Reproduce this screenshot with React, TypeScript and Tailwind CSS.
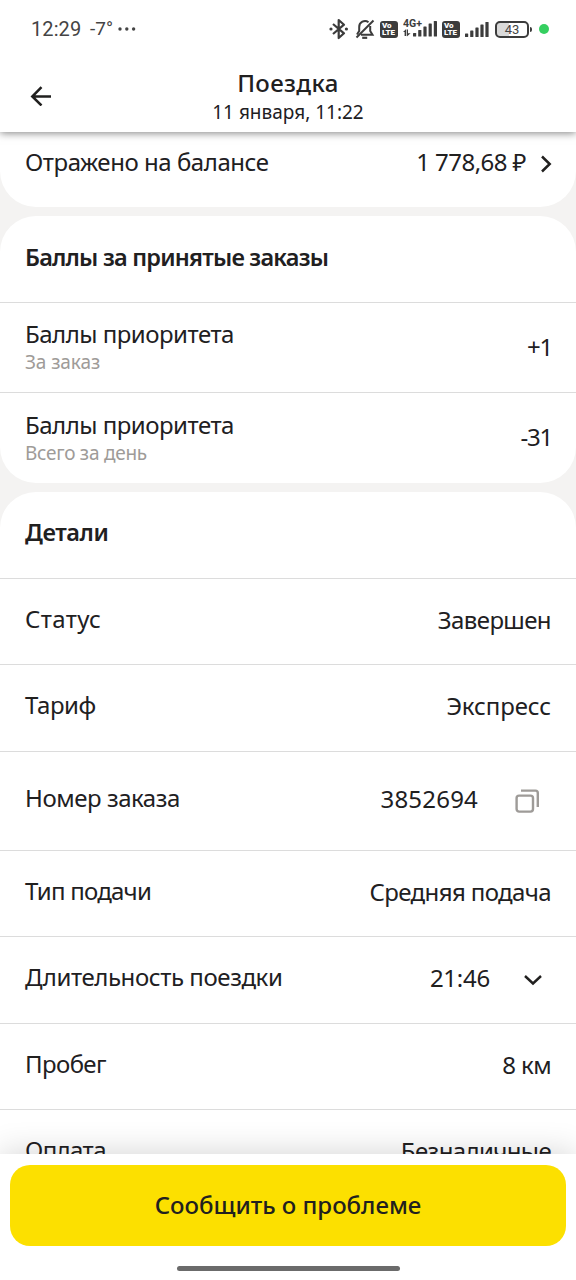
import React from "react";

function Row({
  label,
  value,
  height,
  labelClass = "",
  valueClass = "",
  last = false,
  children,
}: {
  label: string;
  value: string;
  height: string;
  labelClass?: string;
  valueClass?: string;
  last?: boolean;
  children?: React.ReactNode;
}) {
  return (
    <div
      className={`flex shrink-0 items-center justify-between px-[25px] ${height} ${last ? "" : "border-b border-[#dcdcdc]"}`}
    >
      <span className={`pb-[6px] ${labelClass}`}>{label}</span>
      <div className="flex items-center">
        <span className={`pb-[3.5px] ${valueClass}`}>{value}</span>
        {children}
      </div>
    </div>
  );
}

function PointsRow({ sub, subClass, value, last = false }: { sub: string; subClass: string; value: string; last?: boolean }) {
  return (
    <div className={`flex h-[90px] items-center justify-between pl-[25px] pr-[24px] ${last ? "" : "border-b border-[#dcdcdc]"}`}>
      <div className="flex flex-col pb-[1px]">
        <span className="leading-[30px] tracking-[-0.5px]">Баллы приоритета</span>
        <span className={`text-[19px] leading-[26px] text-[#9e9b98] ${subClass}`}>{sub}</span>
      </div>
      <span className="pb-[2px] tracking-[-1.2px]">{value}</span>
    </div>
  );
}

function VoLte() {
  return (
    <div className="flex h-[17px] w-[18px] flex-col justify-center rounded-[3px] bg-[#3c3c3c] pl-[2px] text-[8px] font-black leading-[7px] text-white">
      <span>Vo</span>
      <span>LTE</span>
    </div>
  );
}

function StatusBar() {
  return (
    <div className="flex h-[58px] items-center pl-[31px] font-[Roboto,sans-serif] text-[#444444]">
      <span className="w-[59px] text-[20px] tracking-[0.1px]">12:29</span>
      <span className="w-[28px] text-[19px]">-7°</span>
      <svg width="18" height="4" viewBox="0 0 18 4" fill="#444444">
        <circle cx="2" cy="2" r="1.7" />
        <circle cx="8.8" cy="2" r="1.7" />
        <circle cx="15.6" cy="2" r="1.7" />
      </svg>
      <svg className="ml-[193px]" width="20" height="22" viewBox="0 0 20 22" fill="none" stroke="#3c3c3c" strokeWidth="2.2">
        <path d="M4 6 L15 15.3 L9.7 20 V2 L15 6.7 L4 16" strokeLinejoin="round" />
        <circle cx="2" cy="11" r="1.6" fill="#3c3c3c" stroke="none" />
        <circle cx="17.4" cy="11" r="1.6" fill="#3c3c3c" stroke="none" />
      </svg>
      <svg className="ml-[6px]" width="20" height="22" viewBox="0 0 20 22" fill="none" stroke="#3c3c3c" strokeWidth="2">
        <path d="M13.5 4.2 A5.8 5.8 0 0 0 4.2 9 V13 L2 16.6 M6 16.8 H17.5 L15.2 13 V8" />
        <path d="M18.5 2.5 L1.5 19.5" />
        <path d="M7.2 19.8 H12.2" strokeWidth="2.2" />
      </svg>
      <div className="ml-[5px]">
        <VoLte />
      </div>
      <svg className="ml-[5px]" width="36" height="22" viewBox="0 0 36 22">
        <text x="0" y="8.5" fontSize="10.5" fontWeight="700" fill="#3c3c3c" textLength="19" lengthAdjust="spacingAndGlyphs">4G+</text>
        <g fill="#3c3c3c">
          <path d="M1.6 18 V14 H0 L3.2 11 V18 Z M5 11.5 V15.3 H7.6 L3.9 18.5 V11.5 Z" />
          <rect x="10" y="15" width="3.2" height="3.5" rx="0.6" />
          <rect x="15.2" y="12" width="3.2" height="6.5" rx="0.6" />
          <rect x="20.4" y="8.5" width="3.2" height="10" rx="0.6" />
          <rect x="25.6" y="5.5" width="3.2" height="13" rx="0.6" />
          <rect x="30.8" y="3" width="3.2" height="15.5" rx="0.6" />
        </g>
      </svg>
      <div className="ml-[3px]">
        <VoLte />
      </div>
      <svg className="ml-[5px]" width="24" height="17" viewBox="0 0 24 17" fill="#3c3c3c">
        <rect x="0" y="12.5" width="3.2" height="3.5" rx="0.6" />
        <rect x="5.2" y="9.5" width="3.2" height="6.5" rx="0.6" />
        <rect x="10.4" y="6.5" width="3.2" height="9.5" rx="0.6" />
        <rect x="15.4" y="3.5" width="3.2" height="12.5" rx="0.6" />
        <rect x="20.4" y="1" width="3.2" height="15" rx="0.6" />
      </svg>
      <div className="ml-[6px] flex h-[17px] w-[34px] items-center justify-center rounded-[5px] border-2 border-[#3c3c3c] bg-linear-to-r from-[#dadada] from-40% to-white to-40% text-[13px] leading-none">
        43
      </div>
      <div className="ml-[1px] h-[5px] w-[2px] rounded-r-sm bg-[#3c3c3c]" />
      <div className="ml-[7px] h-[10px] w-[10px] rounded-full bg-[#35cf60]" />
    </div>
  );
}

export default function App() {
  return (
    <div className="flex h-[1280px] w-[576px] flex-col overflow-hidden bg-[#f4f3f2] font-['Noto_Sans',sans-serif] text-[24px] leading-[32px] text-[#21201f]">
      <header className="relative z-10 h-[132px] shrink-0 bg-white shadow-[0_1px_8px_rgba(0,0,0,0.5)]">
        <StatusBar />
        <div className="flex h-[74px] items-center">
          <svg className="ml-[30px] mt-[2px]" width="22" height="20" viewBox="0 0 22 20" fill="none" stroke="#21201f" strokeWidth="2.5">
            <path d="M21 10.5 H2.5 M11.5 1.2 L2.3 10.5 L11.5 19.5" />
          </svg>
          <div className="mr-[52px] flex flex-1 flex-col items-center pt-[4px]">
            <h1 className="text-[24px] font-medium leading-[30px] tracking-[0.4px]">Поездка</h1>
            <p className="text-[19px] leading-[28px]">11 января, 11:22</p>
          </div>
        </div>
      </header>

      <main className="flex min-h-0 flex-1 flex-col gap-[9px] overflow-hidden">
        <section className="flex h-[75px] shrink-0 items-center justify-between rounded-b-[36px] bg-white pl-[25px] pr-[24px]">
          <span className="pb-[16px] tracking-[-0.45px]">Отражено на балансе</span>
          <div className="flex items-center pb-[12px]">
            <span className="pb-[3px] tracking-[-0.55px]">1 778,68 ₽</span>
            <svg className="ml-[14px]" width="12" height="18" viewBox="0 0 12 18" fill="none" stroke="#21201f" strokeWidth="2.5">
              <path d="M2 1.5 L9.7 9 L2 16.5" />
            </svg>
          </div>
        </section>

        <section className="h-[267px] shrink-0 rounded-[36px] bg-white">
          <div className="flex h-[87px] items-center border-b border-[#dcdcdc] px-[25px] pb-[4px] text-[23.5px] font-semibold tracking-[-0.78px]">
            Баллы за принятые заказы
          </div>
          <PointsRow sub="За заказ" subClass="tracking-[-0.1px]" value="+1" />
          <PointsRow sub="Всего за день" subClass="tracking-[-0.25px]" value="-31" last />
        </section>

        <section className="flex shrink-0 flex-col rounded-t-[36px] bg-white">
          <div className="flex h-[87px] items-center border-b border-[#dcdcdc] px-[25px] pb-[6px] text-[23.5px] font-semibold tracking-[-0.4px]">
            Детали
          </div>
          <Row label="Статус" value="Завершен" height="h-[86px]" labelClass="tracking-[0.35px]" valueClass="tracking-[-0.6px]" />
          <Row label="Тариф" value="Экспресс" height="h-[87px]" labelClass="tracking-[-0.4px]" valueClass="tracking-[-0.1px]" />
          <Row label="Номер заказа" value="3852694" height="h-[99px]" labelClass="tracking-[-0.45px]" valueClass="tracking-[0.2px]">
            <svg className="ml-[37px] mr-[11px]" width="25" height="24" viewBox="0 0 25 24" fill="none" stroke="#9e9b98" strokeWidth="2.4">
              <rect x="1.6" y="6.6" width="16.4" height="16" rx="2.5" />
              <path d="M6 1.6 H20.5 Q22.8 1.6 22.8 4 V18" />
            </svg>
          </Row>
          <Row label="Тип подачи" value="Средняя подача" height="h-[86px]" labelClass="tracking-[-0.78px]" valueClass="tracking-[-0.62px]" />
          <Row label="Длительность поездки" value="21:46" height="h-[87px]" labelClass="tracking-[-0.42px]" valueClass="tracking-[-0.25px]">
            <svg className="ml-[33px] mr-[8px]" width="20" height="12" viewBox="0 0 20 12" fill="none" stroke="#21201f" strokeWidth="2.4">
              <path d="M2 2 L10 9.5 L18 2" />
            </svg>
          </Row>
          <Row label="Пробег" value="8 км" height="h-[86px]" labelClass="tracking-[-0.6px]" valueClass="tracking-[-0.6px]" />
          <Row label="Оплата" value="Безналичные" height="h-[86px]" labelClass="tracking-[-0.6px]" valueClass="tracking-[-0.63px]" last />
        </section>
      </main>

      <footer className="relative z-10 flex h-[126px] shrink-0 flex-col items-center bg-white px-[10px] pt-[11px] shadow-[0_-2px_30px_rgba(0,0,0,0.16)]">
        <button className="h-[81px] w-full rounded-[20px] bg-[#fce000] pb-[2px] font-medium">Сообщить о проблеме</button>
        <div className="mt-[20px] h-[5px] w-[223px] rounded-full bg-[#6b6b6b]" />
      </footer>
    </div>
  );
}
